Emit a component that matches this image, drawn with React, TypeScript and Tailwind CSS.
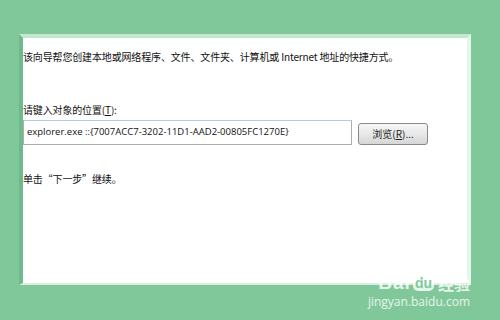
import React from "react";

const cjk = { fontFamily: '"Noto Sans CJK SC", "Noto Sans", sans-serif' };

const Watermark = () => (
  <div className="absolute right-[30px] bottom-[12px] flex flex-col items-end text-white/80 select-none">
    <svg width="30" height="22" viewBox="0 0 30 22" className="mr-[34px] -mb-[8px] opacity-60">
      <g fill="none" stroke="white" strokeWidth="1.2">
        <ellipse cx="8" cy="6" rx="3" ry="4" />
        <ellipse cx="15" cy="4" rx="3" ry="4" />
        <ellipse cx="22" cy="6" rx="3" ry="4" />
        <ellipse cx="15" cy="15" rx="7" ry="6" />
      </g>
    </svg>
    <div className="flex items-center gap-[2px] leading-none">
      <span className="text-[19px] font-bold tracking-[1px]" style={{ fontFamily: '"Liberation Sans", sans-serif' }}>
        Bai
      </span>
      <span
        className="text-[14px] font-bold bg-white/80 text-[#80c899] rounded-[5px] px-[2px] leading-[16px]"
        style={{ fontFamily: '"Liberation Sans", sans-serif' }}
      >
        du
      </span>
      <span className="text-[16px] font-bold ml-[2px]" style={cjk}>
        经验
      </span>
    </div>
    <div className="text-[12px] leading-none mt-[4px]" style={{ fontFamily: '"Open Sans", sans-serif' }}>
      jingyan.baidu.com
    </div>
  </div>
);

export default function App() {
  return (
    <div className="relative w-[500px] h-[320px] bg-[#80c899] pt-[34px] pl-[19px] overflow-hidden">
      <div className="w-[452px] h-[251px] border-t-[4px] border-t-[#c4e7cf] border-l-[4px] border-l-[#6fba8a] border-r-[4px] border-r-[#e4f5ea] border-b-[2px] border-b-[#d9f0e0] bg-white">
        <div className="flex flex-col text-[#111]" style={cjk}>
          <p className="text-[10px] leading-[14px] mt-[12px] tracking-[-0.15px]">
            该向导帮您创建本地或网络程序、文件、文件夹、计算机或 Internet 地址的快捷方式。
          </p>
          <p className="text-[10px] leading-[14px] mt-[39px] tracking-[-0.15px]">
            请键入对象的位置(<span className="underline">T</span>):
          </p>
          <div className="flex items-center mt-[3px]">
            <div className="w-[329px] h-[25px] border border-[#abadb3] border-t-[#b5c9dc] flex items-center pl-[3px]">
              <span className="text-[9.5px] text-[#111]" style={{ fontFamily: '"Open Sans", sans-serif' }}>
                explorer.exe ::{"{"}7007ACC7-3202-11D1-AAD2-00805FC1270E{"}"}
              </span>
            </div>
            <button className="ml-[6px] w-[70px] h-[22px] mt-[2px] border border-[#8a8a8a] rounded-[3px] bg-gradient-to-b from-[#f6f6f6] via-[#e8e8e8] to-[#d6d6d6] text-[10px] text-[#222] flex items-center justify-center">
              浏览(<span className="underline">R</span>)...
            </button>
          </div>
          <p className="text-[10px] leading-[14px] mt-[27px] tracking-[-0.15px]">
            单击“下一步”继续。
          </p>
        </div>
      </div>
      <Watermark />
    </div>
  );
}
